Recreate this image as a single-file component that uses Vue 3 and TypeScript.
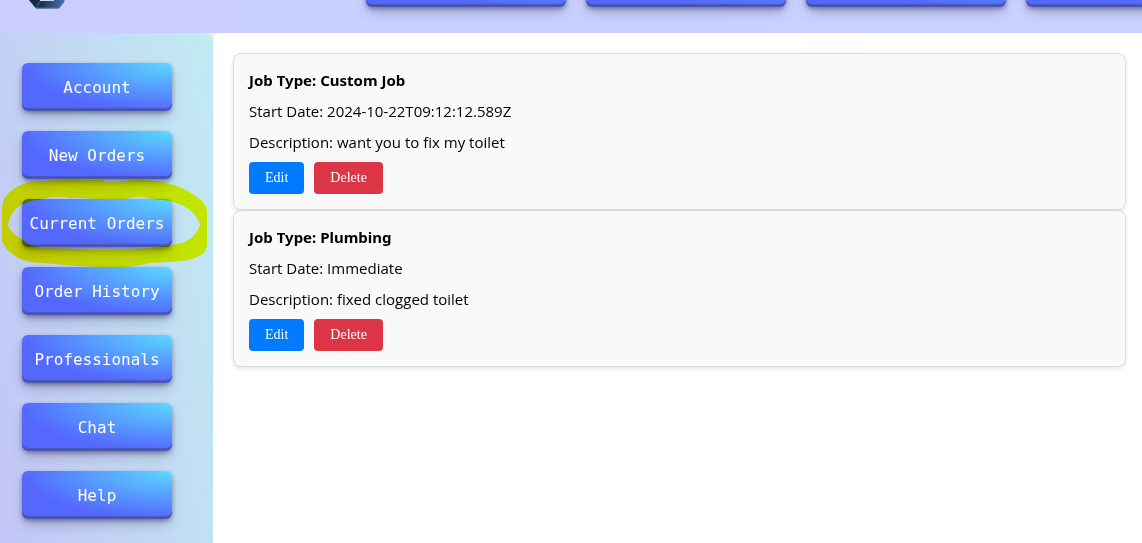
<script setup lang="ts">
interface Order {
  id: number
  jobType: string
  startDate: string
  description: string
}

const sections: string[] = [
  'Account',
  'New Orders',
  'Current Orders',
  'Order History',
  'Professionals',
  'Chat',
  'Help',
]

const current = 'Current Orders'

const orders: Order[] = [
  {
    id: 1,
    jobType: 'Custom Job',
    startDate: '2024-10-22T09:12:12.589Z',
    description: 'want you to fix my toilet',
  },
  {
    id: 2,
    jobType: 'Plumbing',
    startDate: 'Immediate',
    description: 'fixed clogged toilet',
  },
]
</script>

<template>
  <div class="page">
    <header class="topbar">
      <svg class="logo" viewBox="0 0 36 34" aria-hidden="true">
        <defs>
          <linearGradient id="hull" x1="0" x2="1" y1="0" y2="0">
            <stop offset="0" stop-color="#10202f" />
            <stop offset="0.4" stop-color="#1c3856" />
            <stop offset="1" stop-color="#4778b4" />
          </linearGradient>
        </defs>
        <path d="M0 24 L4 16 H32 L36 24 L35 27.500 L30 33.500 H7 L0 25 Z" fill="url(#hull)" />
        <path d="M6.500 33 L11 26.500" fill="none" stroke="#41647f" stroke-width="1" />
        <path d="M7 33 H30" fill="none" stroke="#5d7f9f" stroke-width="0.800" />
        <path d="M11 16 H16 V25 H20 V16 H25 V26 H11 Z" fill="#d4daf8" />
      </svg>
      <nav class="topnav">
        <button v-for="n in 4" :key="n" type="button" class="glow"></button>
      </nav>
    </header>

    <div class="body">
      <aside class="sidebar">
        <nav class="menu">
          <div v-for="name in sections" :key="name" class="item">
            <button type="button" class="glow">{{ name }}</button>
            <svg v-if="name === current" class="marker" viewBox="0 0 206 88" aria-hidden="true">
              <path
                fill-rule="evenodd"
                d="M0 29 C1 21 3 17 8 13 C16 5 28 2 41 2 C62 0 82 1 101 1 L104 3 L114 3 C123 2 132 0 141 1 C151 2 160 2 168 5 C177 7 184 11 189 14 C197 19 204 24 205 32 V67 C203 73 202 75 197 77 C188 82 179 82 168 83 L148 84 C139 86 129 88 118 88 C103 88 90 88 75 87 L41 84 C33 84 27 83 21 81 C12 78 3 70 0 62 Z M6 47 C7 40 8 37 12 32 C17 25 26 22 45 19 C55 17 62 18 70 19 C80 18 88 20 95 20 H121 C129 20 134 17 140 18 C148 19 154 21 161 21 C169 22 176 24 182 27 C192 33 196 39 198 46 C195 53 191 60 180 64 C169 66 159 68 148 69 C134 70 122 71 108 71 C96 71 88 71 75 70 L41 69 C32 67 27 66 24 63 C17 59 10 54 6 47 Z"
              />
            </svg>
          </div>
        </nav>
      </aside>

      <main class="content">
        <article v-for="order in orders" :key="order.id" class="card">
          <p class="line title">Job Type: {{ order.jobType }}</p>
          <p class="line">Start Date: {{ order.startDate }}</p>
          <p class="line">Description: {{ order.description }}</p>
          <div class="actions">
            <button type="button" class="action edit">Edit</button>
            <button type="button" class="action delete">Delete</button>
          </div>
        </article>
      </main>
    </div>
  </div>
</template>

<style>
body {
  margin: 0;
  background: #f0f0f4;
}
</style>

<style scoped>
.page {
  display: flex;
  flex-direction: column;
  min-height: 100vh;
  overflow: hidden;
}

.topbar {
  display: flex;
  align-items: flex-end;
  justify-content: space-between;
  height: 33px;
  overflow: hidden;
  background: linear-gradient(90deg, #c9ceff, #c9d2ff);
}

.logo {
  flex: none;
  width: 36px;
  height: 34px;
  margin: 0 0 24px 29px;
}

.topnav {
  display: flex;
  flex: none;
  gap: 20px;
  margin-right: -84px;
  padding-bottom: 26px;
}

.topnav .glow {
  width: 200px;
}

.glow {
  display: block;
  flex: none;
  width: 150px;
  height: 48px;
  padding: 2px 0 0;
  border: 0;
  border-radius: 6px;
  background: radial-gradient(100% 100% at 100% 0, #5adaff 0, #5468ff 100%);
  box-shadow:
    rgba(45, 35, 66, 0.4) 0 2px 4px,
    rgba(45, 35, 66, 0.3) 0 7px 13px -3px,
    rgba(58, 65, 111, 0.5) 0 -3px 0 inset;
  color: #fff;
  font-family: "DejaVu Sans Mono", monospace;
  font-size: 16px;
  line-height: 24px;
  white-space: nowrap;
  cursor: pointer;
}

.body {
  display: flex;
  flex: 1;
}

.sidebar {
  flex: none;
  box-sizing: border-box;
  width: 213px;
  padding: 30px 22px 24px;
  border-radius: 0 8px 0 0;
  background: linear-gradient(80deg, #c3c5f6 0%, #c1ebf2 100%);
}

.menu {
  display: flex;
  flex-direction: column;
  gap: 20px;
}

.item {
  position: relative;
}

.marker {
  position: absolute;
  top: -20px;
  left: -20px;
  width: 206px;
  height: 88px;
  fill: #ff0;
  mix-blend-mode: multiply;
  pointer-events: none;
}

.content {
  flex: 1;
  min-width: 0;
  padding: 20px 16px 20px 20px;
  border-radius: 8px 0 0 0;
  background: #fff;
}

.card {
  padding: 15px;
  border: 1px solid #ddd;
  border-radius: 8px;
  background: #f9f9f9;
  box-shadow: 0 2px 4px rgba(0, 0, 0, 0.1);
}

.line {
  margin: 0 0 8px;
  color: #000;
  font-family: "Open Sans", "Noto Sans", sans-serif;
  font-size: 15px;
  line-height: 23px;
}

.title {
  font-family: "Noto Sans", "Open Sans", sans-serif;
  font-weight: 700;
}

.actions {
  display: flex;
  gap: 10px;
}

.action {
  height: 32px;
  padding: 0 16px;
  border: 0;
  border-radius: 4px;
  color: #fff;
  font-family: "Liberation Serif", serif;
  font-size: 14px;
  line-height: 16px;
  cursor: pointer;
}

.edit {
  background: #007bff;
}

.delete {
  background: #dc3545;
}
</style>
